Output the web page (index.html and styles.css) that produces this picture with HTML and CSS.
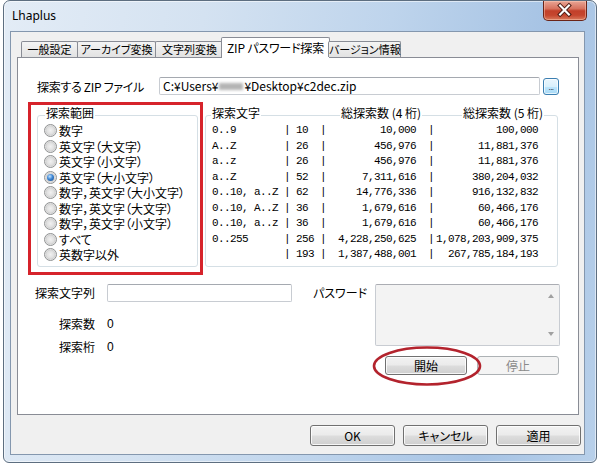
FILE: index.html
```html
<!DOCTYPE html>
<html lang="ja">
<head>
<meta charset="utf-8">
<title>Lhaplus</title>
<link rel="stylesheet" href="styles.css">
</head>
<body>
<div class="window">
  <div class="titlebar">
    <span class="title">Lhaplus</span>
    <div class="close-btn" aria-label="閉じる">
      <svg width="44" height="20" viewBox="0 0 44 20">
        <path d="M17.5 5.5 L26.5 14.5 M26.5 5.5 L17.5 14.5" stroke="#4a1a12" stroke-width="4.2" stroke-linecap="square" fill="none"/>
        <path d="M17.5 5.5 L26.5 14.5 M26.5 5.5 L17.5 14.5" stroke="#ffffff" stroke-width="2.2" stroke-linecap="square" fill="none"/>
      </svg>
    </div>
  </div>
  <div class="client">
    <div class="tabs">
      <div class="tab t1">一般設定</div>
      <div class="tab t2">アーカイブ変換</div>
      <div class="tab t3">文字列変換</div>
      <div class="tab t4 active">ZIP パスワード探索</div>
      <div class="tab t5">バージョン情報</div>
    </div>
    <div class="panel">
      <div class="zip-row">
        <span class="zip-label">探索する ZIP ファイル</span>
        <div class="textbox zip-input">C:¥Users¥<span class="blur"></span>¥Desktop¥c2dec.zip</div>
        <div class="browse">...</div>
      </div>

      <div class="groups">
        <div class="gbox range">
          <div class="ghead"><span class="glabel">探索範囲</span></div>
          <div class="rows">
            <div class="radio"><span class="rb"></span>数字</div>
            <div class="radio"><span class="rb"></span>英文字（大文字）</div>
            <div class="radio"><span class="rb"></span>英文字（小文字）</div>
            <div class="radio"><span class="rb on"></span>英文字（大小文字）</div>
            <div class="radio"><span class="rb"></span>数字，英文字（大小文字）</div>
            <div class="radio"><span class="rb"></span>数字，英文字（大文字）</div>
            <div class="radio"><span class="rb"></span>数字，英文字（小文字）</div>
            <div class="radio"><span class="rb"></span>すべて</div>
            <div class="radio"><span class="rb"></span>英数字以外</div>
          </div>
        </div>

        <div class="gbox stats">
          <div class="ghead">
            <div class="hcell w1"><span class="glabel">探索文字</span></div>
            <div class="hcell w2"><span class="glabel">総探索数 (4 桁)</span></div>
            <div class="hcell w3"><span class="glabel">総探索数 (5 桁)</span></div>
          </div>
          <div class="rows mono">
            <div class="srow"><span>0..9</span><span>|</span><span class="cnt">10</span><span>|</span><span class="n4">10,000</span><span class="b3">|</span><span class="n5">100,000</span></div>
            <div class="srow"><span>A..Z</span><span>|</span><span class="cnt">26</span><span>|</span><span class="n4">456,976</span><span class="b3">|</span><span class="n5">11,881,376</span></div>
            <div class="srow"><span>a..z</span><span>|</span><span class="cnt">26</span><span>|</span><span class="n4">456,976</span><span class="b3">|</span><span class="n5">11,881,376</span></div>
            <div class="srow"><span>a..Z</span><span>|</span><span class="cnt">52</span><span>|</span><span class="n4">7,311,616</span><span class="b3">|</span><span class="n5">380,204,032</span></div>
            <div class="srow"><span>0..10, a..Z</span><span>|</span><span class="cnt">62</span><span>|</span><span class="n4">14,776,336</span><span class="b3">|</span><span class="n5">916,132,832</span></div>
            <div class="srow"><span>0..10, A..Z</span><span>|</span><span class="cnt">36</span><span>|</span><span class="n4">1,679,616</span><span class="b3">|</span><span class="n5">60,466,176</span></div>
            <div class="srow"><span>0..10, a..z</span><span>|</span><span class="cnt">36</span><span>|</span><span class="n4">1,679,616</span><span class="b3">|</span><span class="n5">60,466,176</span></div>
            <div class="srow"><span>0..255</span><span>|</span><span class="cnt">256</span><span>|</span><span class="n4">4,228,250,625</span><span class="b3">|</span><span class="n5">1,078,203,909,375</span></div>
            <div class="srow"><span></span><span>|</span><span class="cnt">193</span><span>|</span><span class="n4">1,387,488,001</span><span class="b3">|</span><span class="n5">267,785,184,193</span></div>
          </div>
        </div>
      </div>

      <div class="lower">
        <div class="lower-left">
          <span class="llabel">探索文字列</span>
          <div class="textbox search-input"></div>
          <span class="llabel">探索数</span>
          <span class="lval">0</span>
          <span class="llabel">探索桁</span>
          <span class="lval">0</span>
        </div>
        <div class="lower-right">
          <span class="pw-label">パスワード</span>
          <div class="pw-col">
            <div class="pw-box">
              <span class="arr up"></span>
              <span class="arr down"></span>
            </div>
            <div class="pw-buttons">
              <div class="btn">開始</div>
              <div class="btn disabled">停止</div>
            </div>
          </div>
        </div>
      </div>

      <div class="mark-rect"></div>
      <svg class="mark-ellipse" width="112" height="42" viewBox="0 0 112 42">
        <ellipse cx="56" cy="21" rx="53" ry="18.5" fill="none" stroke="#b3232d" stroke-width="2.6"/>
      </svg>
    </div>

    <div class="dlg-buttons">
      <div class="btn wide">OK</div>
      <div class="btn wide">キャンセル</div>
      <div class="btn wide">適用</div>
    </div>
  </div>
</div>
</body>
</html>
```

FILE: styles.css
```css
* { box-sizing: border-box; }

html, body {
  margin: 0;
  padding: 0;
}

body {
  width: 600px;
  height: 465px;
  overflow: hidden;
  background: #ffffff;
  font-family: "Noto Sans CJK JP", "Noto Sans", sans-serif;
  font-size: 12px;
  color: #000;
  font-feature-settings: "palt";
}

/* ---------- window frame ---------- */
.window {
  margin-left: 3px;
  width: 594px;
  height: 463px;
  border: 1px solid #5d6e80;
  border-radius: 7px 7px 6px 6px;
  background: linear-gradient(100deg, #e3ecf6 0%, #d4e2f1 30%, #bed4ec 58%, #a6c3e4 82%, #b8d0ea 100%);
  padding: 0 11px 7px 6px;
  display: flex;
  flex-direction: column;
  box-shadow: inset 0 0 0 1px rgba(255, 255, 255, 0.55);
}

.titlebar {
  height: 30px;
  display: flex;
  align-items: flex-start;
  justify-content: space-between;
}

.title {
  font-family: "Noto Sans", "Open Sans", sans-serif;
  font-feature-settings: normal;
  font-size: 12px;
  line-height: 17px;
  padding: 6px 0 0 2px;
  color: #000;
}

.close-btn {
  width: 44px;
  height: 20px;
  margin-right: -2px;
  border: 1px solid #6a2418;
  border-top: none;
  border-radius: 0 0 5px 5px;
  background: linear-gradient(#e9a595 0%, #d7735f 40%, #c2402a 52%, #c5462e 75%, #d97a5c 100%);
  box-shadow: inset 0 0 0 1px rgba(255, 210, 190, 0.45);
  display: flex;
}

.close-btn svg { display: block; margin: -1px 0 0 -1px; }

/* ---------- client area ---------- */
.client {
  flex: 1;
  background: #f0f0f0;
  border: 1px solid #8497ae;
  display: flex;
  flex-direction: column;
}

.tabs {
  display: flex;
  align-items: flex-end;
  height: 20px;
  margin: 5px 0 0 10px;
  position: relative;
  z-index: 1;
}

.tab {
  height: 16px;
  border: 1px solid #898c95;
  border-bottom: none;
  margin-right: -1px;
  background: linear-gradient(#f4f4f4, #e2e2e2);
  text-align: center;
  font-size: 11px;
  line-height: 15px;
  white-space: nowrap;
  border-radius: 2px 2px 0 0;
}

.t1 { width: 57px; }
.t2 { width: 79px; }
.t3 { width: 69px; }
.t5 { width: 73px; }

.tab.active {
  width: 109px;
  height: 21px;
  margin: 0 -2px -1px -2px;
  background: #ffffff;
  font-size: 12px;
  line-height: 17px;
  padding-top: 1px;
  letter-spacing: -0.2px;
}

.panel {
  height: 358px;
  margin: 0 5px 0 6px;
  border: 1px solid #898c95;
  background: #ffffff;
  position: relative;
}

/* ---------- zip row ---------- */
.zip-row {
  display: flex;
  align-items: center;
  height: 18px;
  margin-top: 19px;
  padding-left: 19px;
}

.zip-label { width: 122px; white-space: nowrap; letter-spacing: -0.3px; }

.textbox {
  border: 1px solid #c8ccd2;
  border-top-color: #a5a9b0;
  border-radius: 2px;
  background: #fff;
}

.zip-input {
  width: 381px;
  height: 18px;
  line-height: 16px;
  padding-left: 3px;
  white-space: nowrap;
  display: flex;
  align-items: center;
}

.blur {
  display: inline-block;
  width: 24px;
  height: 7px;
  margin: 0 1px;
  background: #b4b4b4;
  filter: blur(1.6px);
}

.browse {
  width: 16px;
  height: 17px;
  margin-left: 3px;
  border: 1px solid #3c7fb1;
  border-radius: 3px;
  background: linear-gradient(#eaf6fd, #d9f0fc 50%, #bee6fd 51%, #a7d9f5);
  box-shadow: inset 0 0 0 1px rgba(255, 255, 255, 0.7);
  font-size: 8px;
  line-height: 8px;
  text-align: center;
  padding-top: 5px;
  letter-spacing: -0.5px;
  font-family: "Liberation Sans", sans-serif;
}

/* ---------- group boxes ---------- */
.groups {
  display: flex;
  margin-top: 20px;
  padding-left: 19px;
}

.gbox {
  height: 152px;
  border: 1px solid #d5dfe5;
  border-radius: 3px;
}

.range { width: 161px; }
.stats { width: 353px; margin-left: 7px; }

.ghead {
  display: flex;
  height: 14px;
  margin-top: -10px;
  line-height: 14px;
}

.glabel {
  background: #fff;
  padding: 0 1px;
  white-space: nowrap;
}

.range .glabel { margin-left: 7px; }

.hcell { display: flex; }
.w1 { width: 134px; padding-left: 5px; }
.w2 { width: 122px; }
.w3 { flex: 1; }

.rows { padding-top: 3px; }

.radio {
  display: flex;
  align-items: center;
  height: 15.5px;
  padding-left: 6px;
  white-space: nowrap;
}

.rb {
  width: 13px;
  height: 13px;
  border-radius: 50%;
  border: 1px solid #8f9192;
  background: radial-gradient(circle, #f1f1f1 0, #e0e0e0 45%, #d2d2d2 58%, #f2f2f2 75%, #fafafa 100%);
  margin-right: 2px;
  display: grid;
  place-items: center;
  flex: none;
}

.rb.on::after {
  content: "";
  width: 7px;
  height: 7px;
  border-radius: 50%;
  background: radial-gradient(circle at 40% 35%, #c4e4ff 0, #3d86d4 45%, #17457f 100%);
}

.mono {
  font-family: "Liberation Mono", "DejaVu Sans Mono", monospace;
  font-size: 11px;
  letter-spacing: -0.6px;
}

.srow {
  display: grid;
  grid-template-columns: 72px 6px 30px 6px 96px 12px 104px;
  height: 15.5px;
  align-items: center;
  padding-left: 6px;
  white-space: pre;
  line-height: 13px;
}

.srow .cnt { padding-left: 6px; }
.srow .n4 { text-align: right; padding-right: 6px; }
.srow .b3 { text-align: right; }
.srow .n5 { text-align: right; }

/* ---------- lower section ---------- */
.lower {
  display: flex;
  margin-top: 17px;
  padding-left: 19px;
}

.lower-left {
  display: grid;
  grid-template-columns: 58px 185px;
  grid-template-rows: 18px 29px 23px;
  column-gap: 12px;
  align-items: end;
}

.llabel {
  justify-self: end;
  white-space: nowrap;
  line-height: 14px;
}

.lower-left .llabel:first-child { align-self: center; }

.lval {
  line-height: 14px;
  font-family: "Liberation Sans", sans-serif;
}

.search-input { height: 18px; align-self: stretch; }

.lower-right {
  display: flex;
  margin-left: 21px;
}

.pw-label {
  width: 62px;
  line-height: 18px;
  white-space: nowrap;
}

.pw-col {
  display: flex;
  flex-direction: column;
}

.pw-box {
  width: 185px;
  height: 62px;
  border: 1px solid #c8ccd2;
  border-top-color: #abadb3;
  border-radius: 2px;
  background: #f3f3f3;
  display: flex;
  flex-direction: column;
  align-items: flex-end;
  justify-content: space-between;
  padding: 9px 5px 9px 0;
}

.arr {
  width: 0;
  height: 0;
  border-left: 3.5px solid transparent;
  border-right: 3.5px solid transparent;
}

.arr.up { border-bottom: 4px solid #a0a0a0; }
.arr.down { border-top: 4px solid #a0a0a0; }

.pw-buttons {
  display: flex;
  gap: 10px;
  margin-top: 10px;
  padding-left: 10px;
}

.btn {
  width: 82px;
  height: 19px;
  border: 1px solid #707070;
  border-radius: 3px;
  background: linear-gradient(#f2f2f2 0%, #ebebeb 48%, #dddddd 52%, #cfcfcf 100%);
  box-shadow: inset 0 0 0 1px rgba(255, 255, 255, 0.8);
  text-align: center;
  line-height: 17px;
  white-space: nowrap;
}

.btn.disabled {
  border-color: #adb2b5;
  background: #f4f4f4;
  color: #8a8a8a;
  box-shadow: none;
}

.btn.wide {
  width: 85px;
  height: 21px;
  line-height: 19px;
}

/* ---------- annotations ---------- */
.mark-rect {
  position: absolute;
  left: 10px;
  top: 44px;
  width: 175px;
  height: 173px;
  border: 3px solid #d6232b;
}

.mark-ellipse {
  position: absolute;
  left: 353px;
  top: 287px;
}

/* ---------- dialog buttons ---------- */
.dlg-buttons {
  display: flex;
  justify-content: flex-end;
  gap: 8px;
  margin: 10px 3px 0 0;
}
```
